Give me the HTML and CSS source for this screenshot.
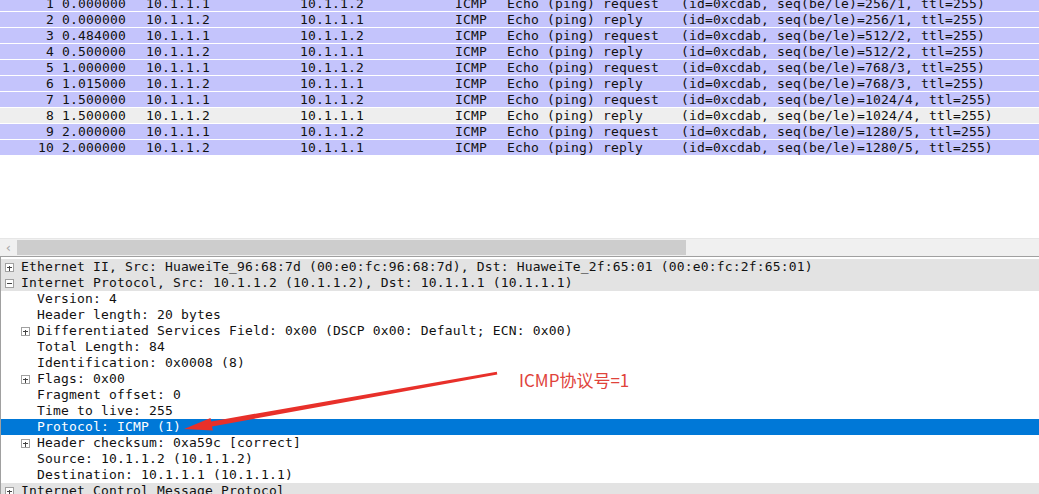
FILE: index.html
```html
<!DOCTYPE html>
<html lang="zh">
<head>
    <meta charset="UTF-8">
    <title>ICMP capture</title>
    <link rel="stylesheet" href="styles.css">
</head>
<body>

    <!-- Packet list -->
    <div class="packet-list">
        <div class="rows">
            <div class="pkt"><span class="no">1</span><span class="time">0.000000</span><span>10.1.1.1</span><span>10.1.1.2</span><span>ICMP</span><span>Echo (ping) request</span><span>(id=0xcdab, seq(be/le)=256/1, ttl=255)</span></div>
            <div class="pkt"><span class="no">2</span><span class="time">0.000000</span><span>10.1.1.2</span><span>10.1.1.1</span><span>ICMP</span><span>Echo (ping) reply</span><span>(id=0xcdab, seq(be/le)=256/1, ttl=255)</span></div>
            <div class="pkt"><span class="no">3</span><span class="time">0.484000</span><span>10.1.1.1</span><span>10.1.1.2</span><span>ICMP</span><span>Echo (ping) request</span><span>(id=0xcdab, seq(be/le)=512/2, ttl=255)</span></div>
            <div class="pkt"><span class="no">4</span><span class="time">0.500000</span><span>10.1.1.2</span><span>10.1.1.1</span><span>ICMP</span><span>Echo (ping) reply</span><span>(id=0xcdab, seq(be/le)=512/2, ttl=255)</span></div>
            <div class="pkt"><span class="no">5</span><span class="time">1.000000</span><span>10.1.1.1</span><span>10.1.1.2</span><span>ICMP</span><span>Echo (ping) request</span><span>(id=0xcdab, seq(be/le)=768/3, ttl=255)</span></div>
            <div class="pkt"><span class="no">6</span><span class="time">1.015000</span><span>10.1.1.2</span><span>10.1.1.1</span><span>ICMP</span><span>Echo (ping) reply</span><span>(id=0xcdab, seq(be/le)=768/3, ttl=255)</span></div>
            <div class="pkt"><span class="no">7</span><span class="time">1.500000</span><span>10.1.1.1</span><span>10.1.1.2</span><span>ICMP</span><span>Echo (ping) request</span><span>(id=0xcdab, seq(be/le)=1024/4, ttl=255)</span></div>
            <div class="pkt marked"><span class="no">8</span><span class="time">1.500000</span><span>10.1.1.2</span><span>10.1.1.1</span><span>ICMP</span><span>Echo (ping) reply</span><span>(id=0xcdab, seq(be/le)=1024/4, ttl=255)</span></div>
            <div class="pkt"><span class="no">9</span><span class="time">2.000000</span><span>10.1.1.1</span><span>10.1.1.2</span><span>ICMP</span><span>Echo (ping) request</span><span>(id=0xcdab, seq(be/le)=1280/5, ttl=255)</span></div>
            <div class="pkt"><span class="no">10</span><span class="time">2.000000</span><span>10.1.1.2</span><span>10.1.1.1</span><span>ICMP</span><span>Echo (ping) reply</span><span>(id=0xcdab, seq(be/le)=1280/5, ttl=255)</span></div>
        </div>
    </div>

    <!-- Horizontal scrollbar -->
    <div class="hscroll">
        <span class="arrow">&lsaquo;</span>
        <div class="thumb"></div>
    </div>

    <!-- Packet details -->
    <div class="details">
        <div class="node top"><span class="exp plus"></span>Ethernet II, Src: HuaweiTe_96:68:7d (00:e0:fc:96:68:7d), Dst: HuaweiTe_2f:65:01 (00:e0:fc:2f:65:01)</div>
        <div class="node top"><span class="exp"></span>Internet Protocol, Src: 10.1.1.2 (10.1.1.2), Dst: 10.1.1.1 (10.1.1.1)</div>
        <div class="node child"><span class="gap"></span>Version: 4</div>
        <div class="node child"><span class="gap"></span>Header length: 20 bytes</div>
        <div class="node child"><span class="exp plus"></span>Differentiated Services Field: 0x00 (DSCP 0x00: Default; ECN: 0x00)</div>
        <div class="node child"><span class="gap"></span>Total Length: 84</div>
        <div class="node child"><span class="gap"></span>Identification: 0x0008 (8)</div>
        <div class="node child"><span class="exp plus"></span>Flags: 0x00</div>
        <div class="node child"><span class="gap"></span>Fragment offset: 0</div>
        <div class="node child"><span class="gap"></span>Time to live: 255</div>
        <div class="node child selected"><span class="gap"></span>Protocol: ICMP (1)</div>
        <div class="node child"><span class="exp plus"></span>Header checksum: 0xa59c [correct]</div>
        <div class="node child"><span class="gap"></span>Source: 10.1.1.2 (10.1.1.2)</div>
        <div class="node child"><span class="gap"></span>Destination: 10.1.1.1 (10.1.1.1)</div>
        <div class="node top"><span class="exp plus"></span>Internet Control Message Protocol</div>
    </div>

    <!-- Annotation -->
    <svg class="annot-arrow" width="1039" height="494" viewBox="0 0 1039 494">
        <polygon points="184,429 210.5,418 211.2,421.4 496.8,371.8 497.3,374.4 212,426.4 212.9,430.5" fill="#e8302a"/>
    </svg>
    <div class="annot-label">ICMP协议号=1</div>

</body>
</html>
```

FILE: styles.css
```css
/* Page */
body {
    margin: 0;
    width: 1039px;
    height: 494px;
    overflow: hidden;
    position: relative;
    background: #fff;
    color: #111;
    font-family: "DejaVu Sans Mono", "Liberation Mono", monospace;
    font-size: 13px;
    letter-spacing: 0.17px;
}

/* Packet list */
.packet-list {
    height: 238px;
    overflow: hidden;
}
.rows {
    margin-top: -5px;
}
.pkt {
    display: grid;
    grid-template-columns: 54px 92px 154px 155px 52px 174px 1fr;
    height: 16px;
    line-height: 15px;
    box-sizing: border-box;
    border-top: 1px solid #fff;
    background: #c4c4fc;
    white-space: nowrap;
}
.pkt.marked {
    background: #eeeeee;
}
.pkt .no {
    text-align: right;
}
.pkt .time {
    padding-left: 8px;
}

/* Scrollbar */
.hscroll {
    height: 17px;
    border-top: 1px solid #e6e6e6;
    background: #f0f0f0;
    display: flex;
    align-items: center;
    position: relative;
}
.hscroll .arrow {
    width: 17px;
    text-align: center;
    color: #a6a6a6;
    font-family: "DejaVu Sans", sans-serif;
    font-size: 13px;
}
.hscroll .thumb {
    width: 669px;
    height: 15px;
    background: #cdcdcd;
}

/* Packet details */
.details {
    border-top: 1px solid #a0a0a0;
    border-left: 1px solid #a0a0a0;
    padding-top: 2px;
}
.node {
    display: flex;
    align-items: center;
    height: 16px;
    line-height: 16px;
    white-space: nowrap;
}
.node.top {
    background: #e3e3e3;
}
.node.child {
    padding-left: 16px;
}
.node.selected {
    background: #0078d7;
    color: #fff;
}
.exp, .gap {
    width: 20px;
    flex: none;
}
.exp {
    position: relative;
    height: 16px;
}
.exp::before {
    content: "";
    position: absolute;
    left: 4px;
    top: 4px;
    width: 7px;
    height: 7px;
    border: 1px solid #a0a0a0;
    background: #fff;
    background-image: linear-gradient(#444, #444);
    background-size: 5px 1px;
    background-position: center;
    background-repeat: no-repeat;
}
.exp.plus::after {
    content: "";
    position: absolute;
    left: 8px;
    top: 7px;
    width: 1px;
    height: 5px;
    background: #444;
}

/* Annotation */
.annot-arrow {
    position: absolute;
    left: 0;
    top: 0;
}
.annot-label {
    position: absolute;
    left: 519px;
    top: 367px;
    color: #e0433b;
    font-family: "Noto Sans CJK SC", "Noto Sans", sans-serif;
    font-size: 17px;
    letter-spacing: 0;
}
```
